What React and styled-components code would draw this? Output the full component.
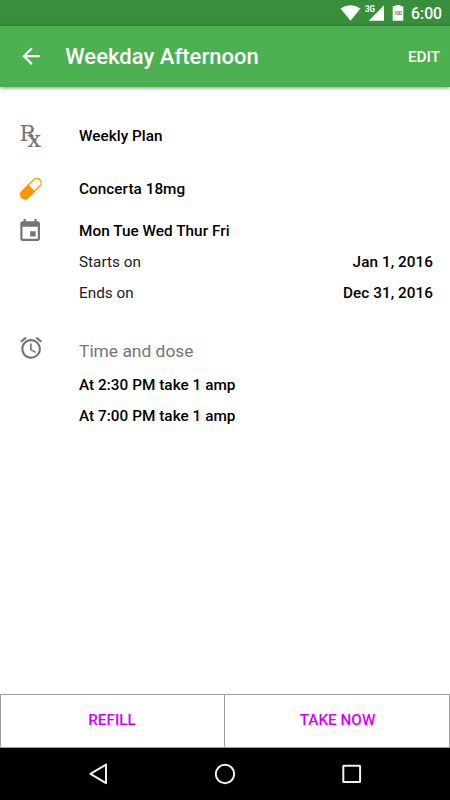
import React from 'react';
import styled, { createGlobalStyle } from 'styled-components';

const GlobalStyle = createGlobalStyle`
  * { box-sizing: border-box; }
  body { margin: 0; background: #fff; font-family: Roboto, sans-serif; }
`;

const Screen = styled.div`
  width: 450px;
  height: 800px;
  display: flex;
  flex-direction: column;
  background: #fff;
  overflow: hidden;
`;

const StatusBar = styled.header`
  height: 26px;
  flex: none;
  display: flex;
  justify-content: flex-end;
  padding-right: 9px;
  background: #388e3c;
  color: #fff;
`;

const StatusIcons = styled.svg`
  width: 70px;
  height: 26px;
`;

const Clock = styled.span`
  width: 30px;
  margin-left: 5px;
  font-size: 15.8px;
  font-weight: 500;
  line-height: 28px;
  white-space: nowrap;
`;

const Toolbar = styled.div`
  height: 61px;
  flex: none;
  display: flex;
  align-items: center;
  padding: 0 10px 0 17.5px;
  background: #4caf50;
  color: #fff;
  box-shadow: 0 1px 4px rgba(0, 0, 0, 0.45);
`;

const Icon = styled.svg`
  width: ${(p) => p.$size || 26.25}px;
  height: ${(p) => p.$size || 26.25}px;
  display: block;
  flex: none;
  overflow: visible;
  fill: ${(p) => p.$color || '#757575'};
`;

const Title = styled.h1`
  flex: 1;
  margin: 0 0 0 21.5px;
  font-size: 22px;
  font-weight: 500;
  letter-spacing: 0.04px;
  line-height: 28px;
`;

const ToolbarAction = styled.button`
  padding: 0;
  border: 0;
  background: none;
  color: #fff;
  font: 500 15.3px/20px Roboto, sans-serif;
`;

const Details = styled.main`
  flex: 1;
  padding: 34px 17px 0 17px;
`;

const Section = styled.section`
  display: grid;
  grid-template-columns: 62px 1fr;
  margin-bottom: ${(p) => p.$gap || 0}px;
`;

const IconSlot = styled.div`
  padding: ${(p) => p.$top || 0}px 0 0 ${(p) => p.$left || 0}px;
`;

const Row = styled.div`
  display: flex;
  justify-content: space-between;
  height: 31px;
  color: ${(p) => (p.$light ? '#212121' : '#000')};
  font-size: 15.3px;
  font-weight: ${(p) => (p.$light ? 400 : 500)};
  letter-spacing: ${(p) => (p.$light ? 0 : 0.04)}px;
  line-height: 31px;
`;

const Value = styled.span`
  color: #000;
  font-weight: 500;
  letter-spacing: 0.06px;
`;

const Heading = styled.h2`
  height: 34px;
  margin: 0;
  color: #757575;
  font-size: 17.4px;
  font-weight: 400;
  line-height: 31px;
`;

const Actions = styled.div`
  height: 54px;
  flex: none;
  display: grid;
  grid-template-columns: 1fr 1fr;
  border: 1px solid #9e9e9e;
`;

const ActionButton = styled.button`
  padding: ${(p) => (p.$divided ? '0 1px 3px 0' : '0 0 3px 1px')};
  border: 0;
  border-right: ${(p) => (p.$divided ? '1px solid #9e9e9e' : '0')};
  background: #fff;
  color: #d500f9;
  font: 500 15.3px/20px Roboto, sans-serif;
`;

const NavBar = styled.nav`
  height: 52px;
  flex: none;
  background: #000;
`;

const NavIcons = styled.svg`
  display: block;
  width: 450px;
  height: 52px;
  fill: none;
  stroke: #f0f0f0;
  stroke-width: 2;
  stroke-linejoin: round;
`;

export default function App() {
  return (
    <>
      <GlobalStyle />
      <Screen>
        <StatusBar>
          <StatusIcons viewBox="336 0 70 26" fill="#fff">
            <path d="M340.5 8.6Q350.5 1.8 360.5 8.6L350.5 20.8Z" />
            <path d="M384 5.2V20.8H368.8Z" />
            <text x="365" y="12.3" fontSize="8.5" fontWeight="700" textLength="10" lengthAdjust="spacingAndGlyphs">3G</text>
            <path d="M395.5 5h5v1.3h2.8v14.5h-10.600V6.300h2.800Z" />
            <text x="394" y="15.300" fontSize="5.5" fontWeight="500" textLength="8" fill="#388e3c">100</text>
          </StatusIcons>
          <Clock>6:00</Clock>
        </StatusBar>
        <Toolbar>
          <Icon viewBox="0 0 24 24" $color="#fff">
            <path d="M20 11H7.830l5.590-5.590L12 4l-8 8 8 8 1.410-1.410L7.830 13H20v-2z" />
          </Icon>
          <Title>Weekday Afternoon</Title>
          <ToolbarAction>EDIT</ToolbarAction>
        </Toolbar>
        <Details>
          <Section $gap={22}>
            <IconSlot $top={1}>
              <Icon viewBox="17 122 27 27" $size={27}>
                <g fontFamily="DejaVu Serif, serif">
                  <text x="19.400" y="140.500" fontSize="22">R</text>
                  <text x="27.300" y="146.800" fontSize="23" textLength="13.800" lengthAdjust="spacingAndGlyphs">x</text>
                </g>
              </Icon>
            </IconSlot>
            <Row>Weekly Plan</Row>
          </Section>
          <Section $gap={11}>
            <IconSlot $top={1}>
              <Icon viewBox="17 175 27 27" $size={27} $color="#ff9800">
                <g transform="rotate(-45 31 188.500)">
                  <rect x="18.200" y="184.100" width="25.200" height="8.800" rx="4.400" fill="none" stroke="#ff9800" strokeWidth="1.200" />
                  <path d="M32 183.500H22.600a5 5 0 0 0 0 10H32Z" />
                </g>
              </Icon>
            </IconSlot>
            <Row>Concerta 18mg</Row>
          </Section>
          <Section $gap={27}>
            <IconSlot $top={1.6} $left={0.4}>
              <Icon viewBox="0 0 24 24">
                <path d="M17 12h-5v5h5v-5zM16 1v2H8V1H6v2H5c-1.110 0-1.990.9-1.990 2L3 19c0 1.100.89 2 2 2h14c1.100 0 2-.9 2-2V5c0-1.100-.9-2-2-2h-1V1h-2zm3 18H5V8h14v11z" />
              </Icon>
            </IconSlot>
            <div>
              <Row>Mon Tue Wed Thur Fri</Row>
              <Row $light>Starts on<Value>Jan 1, 2016</Value></Row>
              <Row $light>Ends on<Value>Dec 31, 2016</Value></Row>
            </div>
          </Section>
          <Section>
            <IconSlot $left={0.6}>
              <Icon viewBox="0 1.2 24 24">
                <path d="M22 5.720l-4.600-3.860-1.290 1.530 4.600 3.860L22 5.720zM7.880 3.390L6.600 1.860 2 5.710l1.290 1.530 4.590-3.850zM12.500 8H11v6l4.750 2.850.75-1.230-4-2.370V8zM12 4c-4.970 0-9 4.030-9 9s4.020 9 9 9a9 9 0 0 0 0-18zm0 16c-3.870 0-7-3.130-7-7s3.130-7 7-7 7 3.130 7 7-3.130 7-7 7z" />
              </Icon>
            </IconSlot>
            <div>
              <Heading>Time and dose</Heading>
              <Row>At 2:30 PM take 1 amp</Row>
              <Row>At 7:00 PM take 1 amp</Row>
            </div>
          </Section>
        </Details>
        <Actions>
          <ActionButton $divided>REFILL</ActionButton>
          <ActionButton>TAKE NOW</ActionButton>
        </Actions>
        <NavBar>
          <NavIcons viewBox="0 748 450 52">
            <path d="M106 764.600V783.200L90.400 773.900Z" />
            <circle cx="225" cy="774" r="9.200" />
            <rect x="343.300" y="765.700" width="16.800" height="16.300" rx="0.500" />
          </NavIcons>
        </NavBar>
      </Screen>
    </>
  );
}
